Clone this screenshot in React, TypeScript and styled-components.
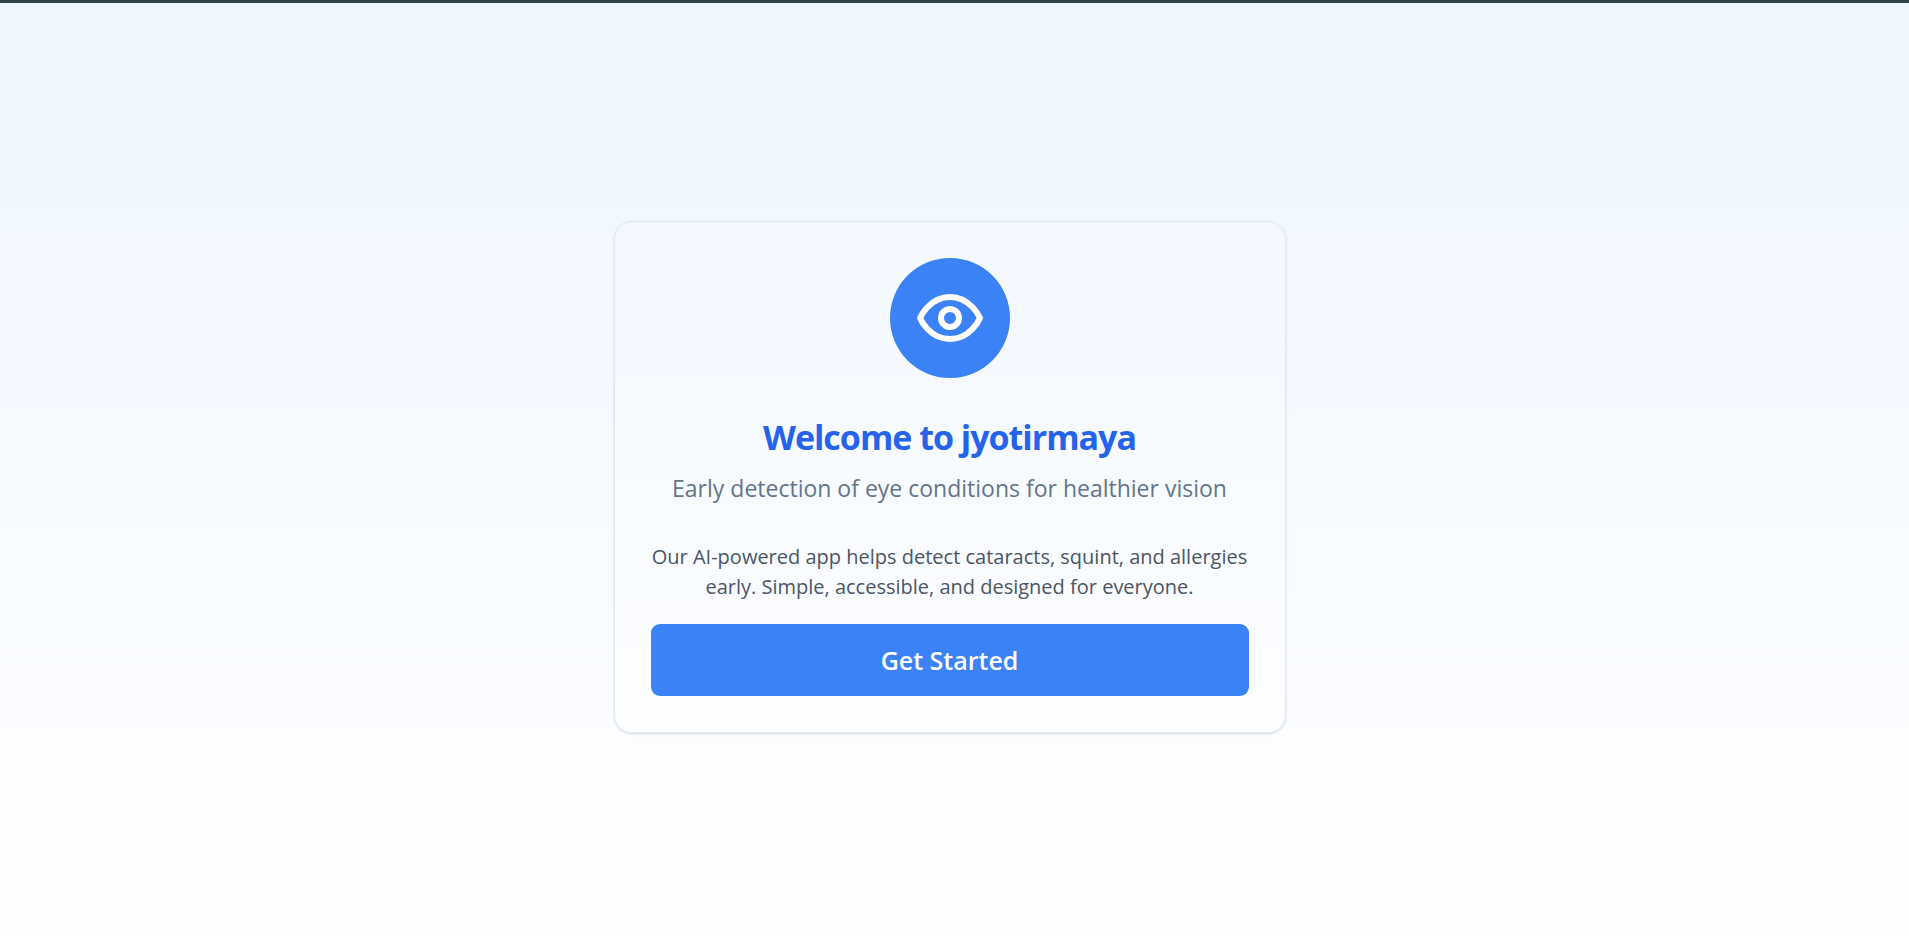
import React from "react";
import styled, { createGlobalStyle } from "styled-components";

const GlobalStyle = createGlobalStyle`
  *, *::before, *::after { box-sizing: border-box; }
  body {
    margin: 0;
    font-family: "Open Sans", "Segoe UI", "Noto Sans", sans-serif;
  }
`;

const Page = styled.main`
  min-height: 100vh;
  display: flex;
  align-items: center;
  justify-content: center;
  padding: 29px 28px 18px 18px;
  border-top: 3px solid #2f4249;
  background: linear-gradient(to bottom, #eff6ff, #ffffff) border-box;
`;

const Card = styled.section`
  width: 100%;
  max-width: 672px;
  padding: 36px;
  display: flex;
  flex-direction: column;
  align-items: center;
  text-align: center;
  border: 1px solid #e2e8f0;
  border-radius: 18px;
  background: linear-gradient(to bottom, #f3f8ff, #fdfeff);
  box-shadow: 0 1px 3px rgba(0, 0, 0, 0.1), 0 1px 2px rgba(0, 0, 0, 0.06);
`;

const Badge = styled.div`
  display: flex;
  padding: 24px;
  margin-bottom: 36px;
  border-radius: 50%;
  background: #3b82f6;
  color: #ffffff;
`;

const Title = styled.h1`
  margin: 0 0 10px;
  font-size: 34px;
  line-height: 46px;
  font-weight: 700;
  letter-spacing: -1px;
  color: #2563eb;
`;

const Subtitle = styled.p`
  margin: 0 0 36px;
  font-size: 23px;
  line-height: 36px;
  color: #64748b;
`;

const Description = styled.p`
  margin: 0 0 22px;
  font-size: 20px;
  line-height: 30px;
  color: #4b5563;
`;

const StartButton = styled.button`
  width: 100%;
  height: 72px;
  border: 0;
  border-radius: 9px;
  background: #3b82f6;
  color: #ffffff;
  font: inherit;
  font-size: 25px;
  font-weight: 600;
  cursor: pointer;
`;

const EyeIcon = () => (
  <svg
    width="72"
    height="72"
    viewBox="0 0 24 24"
    fill="none"
    stroke="currentColor"
    strokeWidth="2"
    strokeLinecap="round"
    strokeLinejoin="round"
    aria-hidden="true"
  >
    <path d="M2 12s3-7 10-7 10 7 10 7-3 7-10 7-10-7-10-7Z" />
    <circle cx="12" cy="12" r="3" />
  </svg>
);

export default function App() {
  return (
    <>
      <GlobalStyle />
      <Page>
        <Card>
          <Badge>
            <EyeIcon />
          </Badge>
          <Title>Welcome to jyotirmaya</Title>
          <Subtitle>Early detection of eye conditions for healthier vision</Subtitle>
          <Description>
            Our AI-powered app helps detect cataracts, squint, and allergies early. Simple,
            accessible, and designed for everyone.
          </Description>
          <StartButton type="button">Get Started</StartButton>
        </Card>
      </Page>
    </>
  );
}
